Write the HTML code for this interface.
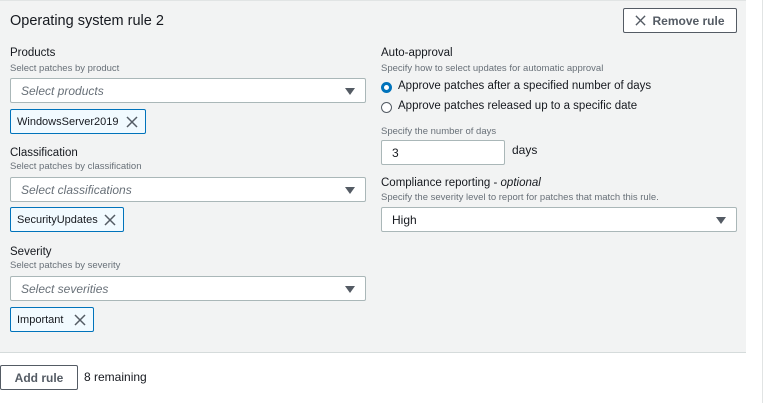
<!DOCTYPE html>
<html><head><style>
*{box-sizing:border-box;margin:0;padding:0}
body{width:767px;height:403px;background:#fff;font-family:"Liberation Sans",sans-serif;color:#16191f;position:relative;overflow:hidden}
.panel{position:absolute;left:0;top:0;width:746px;height:353px;background:#f2f3f3;border-top:1px solid #e1e4e4;border-bottom:1px solid #d5dbdb}
.vline{position:absolute;left:762px;top:0;width:1px;height:403px;background:#e1e4e4}
.a{position:absolute;white-space:nowrap}
.lbl{font-size:11.5px}
.hlp{font-size:9.5px;color:#687078}
.sel{position:absolute;background:#fff;border:1px solid #aab7b8;border-radius:2px;height:25px;font-size:12px;padding:5px 10px;white-space:nowrap}
.sel i{color:#687078}
.tri{position:absolute;right:10px;top:9px;width:0;height:0;border-left:5px solid transparent;border-right:5px solid transparent;border-top:7px solid #545b64}
.tok{position:absolute;background:#f1faff;border:1px solid #0073bb;border-radius:2px;height:25px;font-size:11px;padding:6px 6px;white-space:nowrap}
.tok svg{position:absolute;right:7px;top:6px}
.btn{position:absolute;background:#fff;border:1px solid #545b64;border-radius:2px;font-weight:bold;font-size:12px;color:#545b64;text-align:center;white-space:nowrap}
</style></head><body>
<div class="panel"></div>
<div class="vline"></div>
<div class="a" style="left:10px;top:13px;font-size:14.5px">Operating system rule 2</div>

<div class="a lbl" style="left:10px;top:47px">Products</div>
<div class="a hlp" style="left:10px;top:63px">Select patches by product</div>
<div class="sel" style="left:10px;top:78px;width:356px"><i>Select products</i><span class="tri"></span></div>
<div class="tok" style="left:10px;top:109px;width:136px">WindowsServer2019<svg width="12" height="12" viewBox="0 0 12 12"><path d="M1 1L11 11M11 1L1 11" stroke="#545b64" stroke-width="1.5"/></svg></div>

<div class="a lbl" style="left:10px;top:147px">Classification</div>
<div class="a hlp" style="left:10px;top:161px">Select patches by classification</div>
<div class="sel" style="left:10px;top:177px;width:356px"><i>Select classifications</i><span class="tri"></span></div>
<div class="tok" style="left:10px;top:207px;width:114px">SecurityUpdates<svg width="12" height="12" viewBox="0 0 12 12"><path d="M1 1L11 11M11 1L1 11" stroke="#545b64" stroke-width="1.5"/></svg></div>

<div class="a lbl" style="left:10px;top:246px">Severity</div>
<div class="a hlp" style="left:10px;top:260px">Select patches by severity</div>
<div class="sel" style="left:10px;top:276px;width:356px"><i>Select severities</i><span class="tri"></span></div>
<div class="tok" style="left:10px;top:307px;width:84px">Important<svg width="12" height="12" viewBox="0 0 12 12"><path d="M1 1L11 11M11 1L1 11" stroke="#545b64" stroke-width="1.5"/></svg></div>

<div class="btn" style="left:623px;top:8px;width:114px;height:25px;padding-top:5px"><svg width="11" height="11" viewBox="0 0 12 12" style="margin-right:6px;position:relative;top:1px"><path d="M1 1L11 11M11 1L1 11" stroke="#545b64" stroke-width="1.5"/></svg>Remove rule</div>

<div class="a lbl" style="left:381px;top:47px">Auto-approval</div>
<div class="a hlp" style="left:381px;top:63px">Specify how to select updates for automatic approval</div>
<div class="a" style="left:381px;top:82px;width:11px;height:11px;border-radius:50%;border:3.5px solid #0073bb;background:#fff"></div>
<div class="a" style="left:398px;top:80px;font-size:11.5px">Approve patches after a specified number of days</div>
<div class="a" style="left:381px;top:102px;width:11px;height:11px;border-radius:50%;border:1px solid #545b64;background:#fff"></div>
<div class="a" style="left:398px;top:100px;font-size:11.5px">Approve patches released up to a specific date</div>
<div class="a hlp" style="left:381px;top:126px">Specify the number of days</div>
<div class="sel" style="left:381px;top:140px;width:124px;height:25px">3</div>
<div class="a" style="left:512px;top:143px;font-size:12px">days</div>
<div class="a lbl" style="left:381px;top:177px">Compliance reporting - <i>optional</i></div>
<div class="a hlp" style="left:381px;top:192px">Specify the severity level to report for patches that match this rule.</div>
<div class="sel" style="left:381px;top:207px;width:356px">High<span class="tri"></span></div>

<div class="btn" style="left:0;top:365px;width:78px;height:25px;padding-top:5px">Add rule</div>
<div class="a" style="left:84px;top:370px;font-size:12px">8 remaining</div>
</body></html>
